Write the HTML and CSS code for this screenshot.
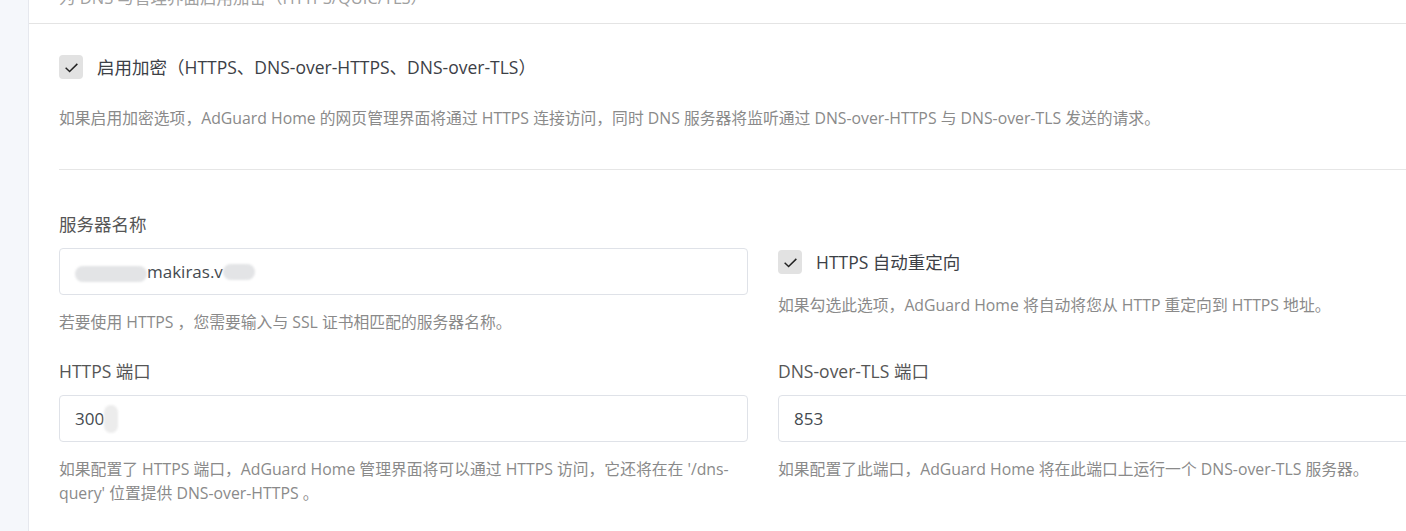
FILE: index.html
```html
<!DOCTYPE html>
<html lang="zh-CN">
<head>
    <meta charset="UTF-8">
    <meta name="viewport" content="width=device-width, initial-scale=1.0">
    <title>加密设置 - AdGuard Home</title>
    <link rel="stylesheet" href="styles.css">
</head>
<body>
    <div class="page">
        <div class="card">
            <div class="card-header">
                <div class="card-subtitle">为 DNS 与管理界面启用加密（HTTPS/QUIC/TLS）</div>
            </div>
            <div class="card-body">
                <label class="checkbox">
                    <span class="checkbox-box">
                        <svg viewBox="0 0 16 16" width="17" height="17"><polyline points="2.5,8.3 6.2,11.8 13.5,4.6" fill="none" stroke="#222" stroke-width="1.4"/></svg>
                    </span>
                    <span class="checkbox-label">启用加密（HTTPS、DNS-over-HTTPS、DNS-over-TLS）</span>
                </label>
                <div class="form-text first-text">如果启用加密选项，AdGuard Home 的网页管理界面将通过 HTTPS 连接访问，同时 DNS 服务器将监听通过 DNS-over-HTTPS 与 DNS-over-TLS 发送的请求。</div>

                <hr class="divider">

                <div class="form-grid">
                    <div class="form-group">
                        <label class="form-label" for="server_name">服务器名称</label>
                        <div class="form-control" id="server_name"><span class="redact redact-a"></span>makiras.v<span class="redact redact-b"></span></div>
                        <div class="form-text">若要使用 HTTPS ，您需要输入与 SSL 证书相匹配的服务器名称。</div>
                    </div>
                    <div class="form-group redirect-group">
                        <label class="checkbox">
                            <span class="checkbox-box">
                                <svg viewBox="0 0 16 16" width="17" height="17"><polyline points="2.5,8.3 6.2,11.8 13.5,4.6" fill="none" stroke="#222" stroke-width="1.4"/></svg>
                            </span>
                            <span class="checkbox-label">HTTPS 自动重定向</span>
                        </label>
                        <div class="form-text redirect-text">如果勾选此选项，AdGuard Home 将自动将您从 HTTP 重定向到 HTTPS 地址。</div>
                    </div>

                    <div class="form-group">
                        <label class="form-label" for="port_https">HTTPS 端口</label>
                        <div class="form-control" id="port_https">300<span class="redact redact-c"></span></div>
                        <div class="form-text">如果配置了 HTTPS 端口，AdGuard Home 管理界面将可以通过 HTTPS 访问，它还将在在 '/dns-query' 位置提供 DNS-over-HTTPS 。</div>
                    </div>
                    <div class="form-group">
                        <label class="form-label" for="port_dns_over_tls">DNS-over-TLS 端口</label>
                        <div class="form-control" id="port_dns_over_tls">853</div>
                        <div class="form-text">如果配置了此端口，AdGuard Home 将在此端口上运行一个 DNS-over-TLS 服务器。</div>
                    </div>
                </div>
            </div>
        </div>
    </div>
</body>
</html>
```

FILE: styles.css
```css
* {
    margin: 0;
    padding: 0;
    box-sizing: border-box;
}

body {
    font-family: 'Open Sans', 'Noto Sans CJK SC', sans-serif;
    background: #f5f7fb;
    overflow: hidden;
    height: 531px;
}

.page {
    padding-left: 28px;
}

.card {
    background: #fff;
    border-left: 1px solid #e6e8ee;
    width: 1480px;
    margin-top: -12px;
    min-height: 560px;
}

.card-header {
    padding: 0 30px 15px;
    border-bottom: 1px solid #e4e4e4;
}

.card-subtitle {
    font-size: 16.5px;
    line-height: 20px;
    color: #a0a0a0;
}

.card-body {
    padding: 31px 0 0 30px;
}

.checkbox {
    display: flex;
    align-items: center;
    gap: 14px;
    height: 24px;
}

.checkbox-box {
    flex: none;
    width: 24px;
    height: 24px;
    border-radius: 4px;
    background: #e2e2e2;
    display: flex;
    align-items: center;
    justify-content: center;
}

.checkbox-label {
    font-size: 17.5px;
    line-height: 24px;
    color: #3c4046;
}

.form-text {
    font-size: 15.8px;
    line-height: 24px;
    color: #8a8a8a;
    margin-top: 15px;
}

.first-text {
    margin-top: 27px;
}

.divider {
    border: none;
    border-top: 1px solid #e6e6e6;
    margin: 39px 0 42px;
}

.form-grid {
    display: grid;
    grid-template-columns: 689px 689px;
    column-gap: 30px;
    row-gap: 25px;
}

.form-label {
    display: block;
    font-size: 17.5px;
    line-height: 24px;
    color: #555;
    margin-bottom: 12px;
}

.form-control {
    height: 47px;
    border: 1px solid #dfe2e8;
    border-radius: 4px;
    padding: 0 15px;
    font-size: 17px;
    color: #444a50;
    display: flex;
    align-items: center;
}

.redirect-group {
    padding-top: 38px;
}

.redirect-text {
    margin-top: 19px;
}

.redact {
    display: inline-block;
    background: #e3e4e6;
    border-radius: 8px;
    filter: blur(1px);
}

.redact-a {
    width: 72px;
    height: 16px;
    margin-top: 4px;
}

.redact-b {
    width: 32px;
    height: 16px;
}

.redact-c {
    width: 14px;
    height: 28px;
    background: #ececec;
}
```
